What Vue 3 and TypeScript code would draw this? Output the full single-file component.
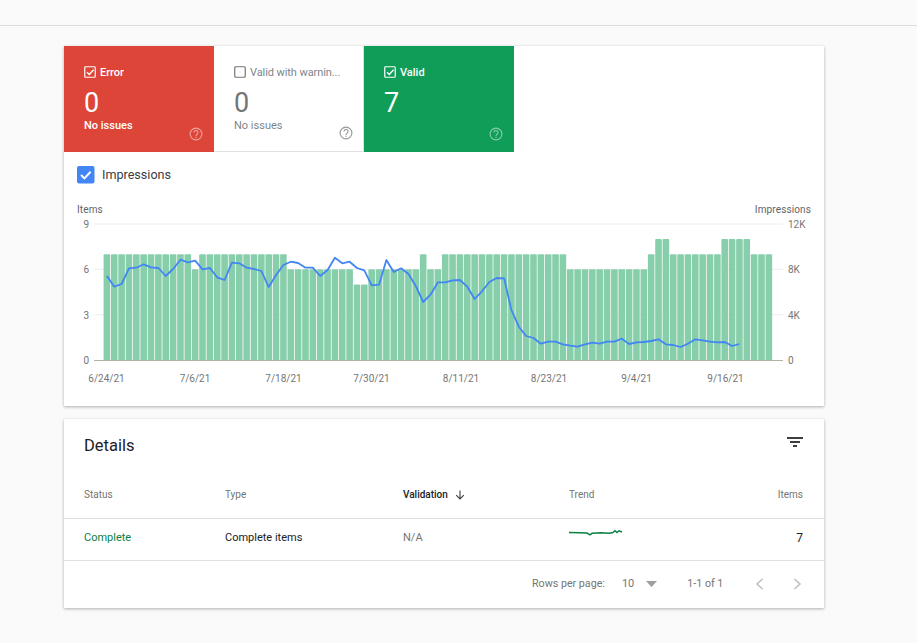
<script setup lang="ts">
const y = (v: number) => 360 - (v * 136) / 9

const runs: [number, number][] = [
  [12, 7], [1, 6], [12, 7], [9, 6], [2, 5], [7, 6], [1, 7], [2, 6], [17, 7],
  [11, 6], [1, 7], [2, 8], [7, 7], [4, 8], [3, 7],
]
const values: number[] = []
for (const [n, v] of runs) for (let i = 0; i < n; i++) values.push(v)
const bars = values.map((v, i) => ({ x: 103.6 + i * 7.355, top: y(v) }))
const barPath = (b: { x: number; top: number }) =>
  `M${b.x.toFixed(2)} 360V${(b.top + 1).toFixed(1)}q0 -1 1 -1h4.6q1 0 1 1V360Z`

const lineY = [276, 286.7, 284, 268.3, 267.7, 264.3, 267.3, 268, 276, 269, 259.7, 262.3, 260.7, 269.3, 268, 277.3, 280, 262.7, 263.3, 267.7, 269, 271, 287, 275, 265, 261.7, 263, 267.7, 267.7, 276, 270, 257.7, 263.3, 261.7, 268, 270.3, 285.3, 284.7, 260, 272, 268.3, 274, 286, 302, 294.7, 282.3, 282.3, 280.3, 280, 286.7, 299, 291.3, 282, 278, 278.3, 310, 326.7, 336, 338, 343.7, 341.7, 341.7, 344.3, 345.7, 346.7, 344.3, 342.7, 343.7, 341.7, 341.7, 338.7, 344, 342.3, 342, 341, 339.3, 344.3, 345, 347, 343.7, 339.3, 340.3, 341.7, 342.3, 342, 346, 344]
const linePoints = lineY.map((v, i) => `${(106.9 + i * 7.355).toFixed(1)},${v}`).join(' ')

const grid = [224, 269.3, 314.7]
const leftTicks = [{ t: '9', y: 224 }, { t: '6', y: 269.3 }, { t: '3', y: 314.7 }, { t: '0', y: 360 }]
const rightTicks = [{ t: '12K', y: 224 }, { t: '8K', y: 269.3 }, { t: '4K', y: 314.7 }, { t: '0', y: 360 }]
const dates = [
  { t: '6/24/21', x: 106.5 }, { t: '7/6/21', x: 195 }, { t: '7/18/21', x: 283.5 },
  { t: '7/30/21', x: 371.5 }, { t: '8/11/21', x: 461 }, { t: '8/23/21', x: 549 },
  { t: '9/4/21', x: 636.5 }, { t: '9/16/21', x: 725.5 },
]

const tiles = [
  { key: 'error', label: 'Error', value: '0', note: 'No issues', checked: true },
  { key: 'warn', label: 'Valid with warnin...', value: '0', note: 'No issues', checked: false },
  { key: 'valid', label: 'Valid', value: '7', note: '', checked: true },
]
</script>

<template>
  <div class="page">
    <div class="topbar"></div>

    <section class="card summary">
      <div class="tiles">
        <div v-for="t in tiles" :key="t.key" class="tile" :class="t.key">
          <div class="tile-head">
            <svg class="box" width="13" height="13" viewBox="0 0 13 13">
              <rect x=".75" y=".75" width="10.5" height="10.5" rx="1" fill="none" stroke="currentColor" stroke-width="1.2" />
              <path v-if="t.checked" d="M3 6.2l2.3 2.3L9.6 3.8" fill="none" stroke="currentColor" stroke-width="1.4" />
            </svg>
            <span class="tile-label">{{ t.label }}</span>
          </div>
          <div class="tile-value">{{ t.value }}</div>
          <div class="tile-note">{{ t.note }}</div>
          <svg class="help" width="14" height="14" viewBox="0 0 14 14">
            <circle cx="7" cy="7" r="5.9" fill="none" stroke="currentColor" stroke-width="1.1" />
            <path d="M5 5.5a2 2 0 1 1 3.2 1.6C7.4 7.700 7 8 7 9" fill="none" stroke="currentColor" stroke-width="1.1" />
            <rect x="6.4" y="9.7" width="1.2" height="1.2" fill="currentColor" />
          </svg>
        </div>
      </div>

      <div class="legend">
        <svg width="18" height="18" viewBox="0 0 18 18">
          <rect width="17.5" height="17.5" rx="2" fill="#4285f4" />
          <path d="M4 9l3.4 3.4L13.6 5.8" fill="none" stroke="#fff" stroke-width="2" />
        </svg>
        <span>Impressions</span>
      </div>

      <svg class="chart" width="760" height="214" viewBox="64 192 760 214">
        <text x="77" y="213" class="axis-title">Items</text>
        <text x="811" y="213" class="axis-title" text-anchor="end">Impressions</text>
        <line v-for="g in grid" :key="g" x1="94" x2="783" :y1="g" :y2="g" stroke="#eeeeee" />
        <path v-for="(b, i) in bars" :key="i" :d="barPath(b)" fill="#87ceab" />
        <line x1="94" x2="783" y1="360.5" y2="360.5" stroke="#b5b0a8" />
        <polyline :points="linePoints" fill="none" stroke="#4285f4" stroke-width="1.8" stroke-linejoin="round" />
        <text v-for="t in leftTicks" :key="t.t" x="89" :y="t.y + 4" class="tick" text-anchor="end">{{ t.t }}</text>
        <text v-for="t in rightTicks" :key="t.t" x="788" :y="t.y + 4" class="tick">{{ t.t }}</text>
        <text v-for="d in dates" :key="d.t" :x="d.x" y="382" class="tick" text-anchor="middle">{{ d.t }}</text>
      </svg>
    </section>

    <section class="card details">
      <div class="details-head">
        <h2>Details</h2>
        <svg width="16" height="10" viewBox="0 0 16 10">
          <path d="M0 0h16v2H0zM3 4h10v2H3zM6 8h4v2H6z" fill="#3c4043" />
        </svg>
      </div>

      <div class="row head">
        <span>Status</span>
        <span>Type</span>
        <span class="sorted">Validation
          <svg width="10" height="10" viewBox="0 0 10 10">
            <path d="M5 .5v8.400M1.200 5.200L5 9l3.800-3.800" fill="none" stroke="#3c4043" stroke-width="1.1" />
          </svg>
        </span>
        <span>Trend</span>
        <span class="num">Items</span>
      </div>
      <div class="row body">
        <span class="status">Complete</span>
        <span class="type">Complete items</span>
        <span class="na">N/A</span>
        <span class="trend">
          <svg width="54" height="12" viewBox="0 0 54 12">
            <polyline points="0,5.500 10,5.800 18,6 21,7.800 23,6.300 32,5.700 40,6.300 44,5.500 46,3.800 48,5.500 50,3.800 53,5" fill="none" stroke="#0b8043" stroke-width="1.500" />
          </svg>
        </span>
        <span class="num count">7</span>
      </div>

      <div class="pager">
        <span class="rpp">Rows per page:</span>
        <span class="size">10</span>
        <svg class="drop" width="11" height="6" viewBox="0 0 11 6"><path d="M0 0h11L5.500 6z" fill="#9e9e9e" /></svg>
        <span class="range">1-1 of 1</span>
        <svg class="chev first" width="9" height="12" viewBox="0 0 9 12"><path d="M7.500 1L2 6l5.500 5" fill="none" stroke="#bdbdbd" stroke-width="1.500" /></svg>
        <svg class="chev" width="9" height="12" viewBox="0 0 9 12"><path d="M1.500 1L7 6l-5.500 5" fill="none" stroke="#bdbdbd" stroke-width="1.500" /></svg>
      </div>
    </section>
  </div>
</template>

<style>
html, body { margin: 0; background: #fafafa; }
</style>

<style scoped>
.page {
  width: 917px;
  height: 643px;
  overflow: hidden;
  background: #fafafa;
  font-family: Roboto, "Liberation Sans", sans-serif;
  color: #212121;
}
.topbar {
  height: 25px;
  border-bottom: 1px solid #dcdcdc;
}
.card {
  width: 760px;
  margin-left: 64px;
  background: #fff;
  box-shadow: 0 1px 3px rgba(0, 0, 0, .3);
}
.summary {
  margin-top: 20px;
  height: 360px;
}
.tiles { display: flex; }
.tile {
  position: relative;
  box-sizing: border-box;
  width: 150px;
  height: 106px;
  padding: 20px 20px 0;
  color: #fff;
}
.tile.error { background: #dd4539; }
.tile.valid { background: #0f9d58; }
.tile.warn {
  color: #757575;
  border-bottom: 1px solid #e0e0e0;
  border-right: 1px solid #e0e0e0;
}
.tile.warn .tile-label { color: #80868b; }
.tile.warn .box { color: #757575; }
.tile-head {
  display: flex;
  align-items: center;
  gap: 3px;
  height: 13px;
}
.tile-label { font-size: 11px; font-weight: 500; white-space: nowrap; }
.warn .tile-label { font-weight: 400; letter-spacing: -.08px; }
.tile-value {
  margin-top: 8px;
  font-size: 27px;
  line-height: 32px;
  font-weight: 400;
}
.tile-note {
  font-size: 11px;
  line-height: 14px;
  font-weight: 500;
}
.warn .tile-note { font-weight: 400; color: #80868b; }
.help {
  position: absolute;
  right: 11px;
  bottom: 11px;
  opacity: .5;
}
.warn .help { right: 10px; color: #5f6368; opacity: .65; }
.legend {
  display: flex;
  align-items: center;
  gap: 7px;
  height: 18px;
  margin: 14px 0 0 13px;
  font-size: 12.6px;
  color: #3c4043;
}
.legend span { margin-top: -2px; }
.chart { display: block; margin-top: 8px; }
.axis-title { font-size: 10px; letter-spacing: .12px; fill: #5f6368; }
.tick { font-size: 10px; fill: #757575; }
.details {
  margin-top: 13px;
  height: 189px;
}
.details-head {
  display: flex;
  justify-content: space-between;
  height: 54px;
  padding: 0 21px 0 20px;
}
.details-head h2 {
  margin: 17px 0 0;
  font-size: 16.5px;
  line-height: 20px;
  font-weight: 400;
  color: #202124;
}
.details-head svg { margin-top: 18px; }
.row {
  display: grid;
  grid-template-columns: 141px 178px 166px 1fr 60px;
  align-items: center;
  padding: 0 21px 0 20px;
  border-bottom: 1px solid #e0e0e0;
}
.row.head {
  height: 43px;
  padding-bottom: 2px;
  font-size: 10px;
  color: #757575;
}
.sorted {
  display: flex;
  align-items: center;
  gap: 7px;
  font-weight: 500;
  color: #202124;
}
.num { text-align: right; }
.row.body {
  height: 37px;
  padding-bottom: 4px;
  font-size: 11px;
}
.status { color: #0b8043; }
.type { color: #202124; }
.na { color: #757575; }
.trend { display: flex; height: 12px; margin-top: -10px; }
.count { font-size: 12px; color: #202124; }
.pager {
  display: flex;
  align-items: center;
  height: 45px;
  padding-bottom: 2px;
  padding-left: 468px;
  font-size: 10.7px;
  color: #757575;
}
.size { margin-left: 17px; font-size: 11px; }
.drop { margin-left: 12px; }
.range { margin-left: 30px; }
.chev { margin-left: 29px; }
.chev.first { margin-left: 32px; }
</style>
